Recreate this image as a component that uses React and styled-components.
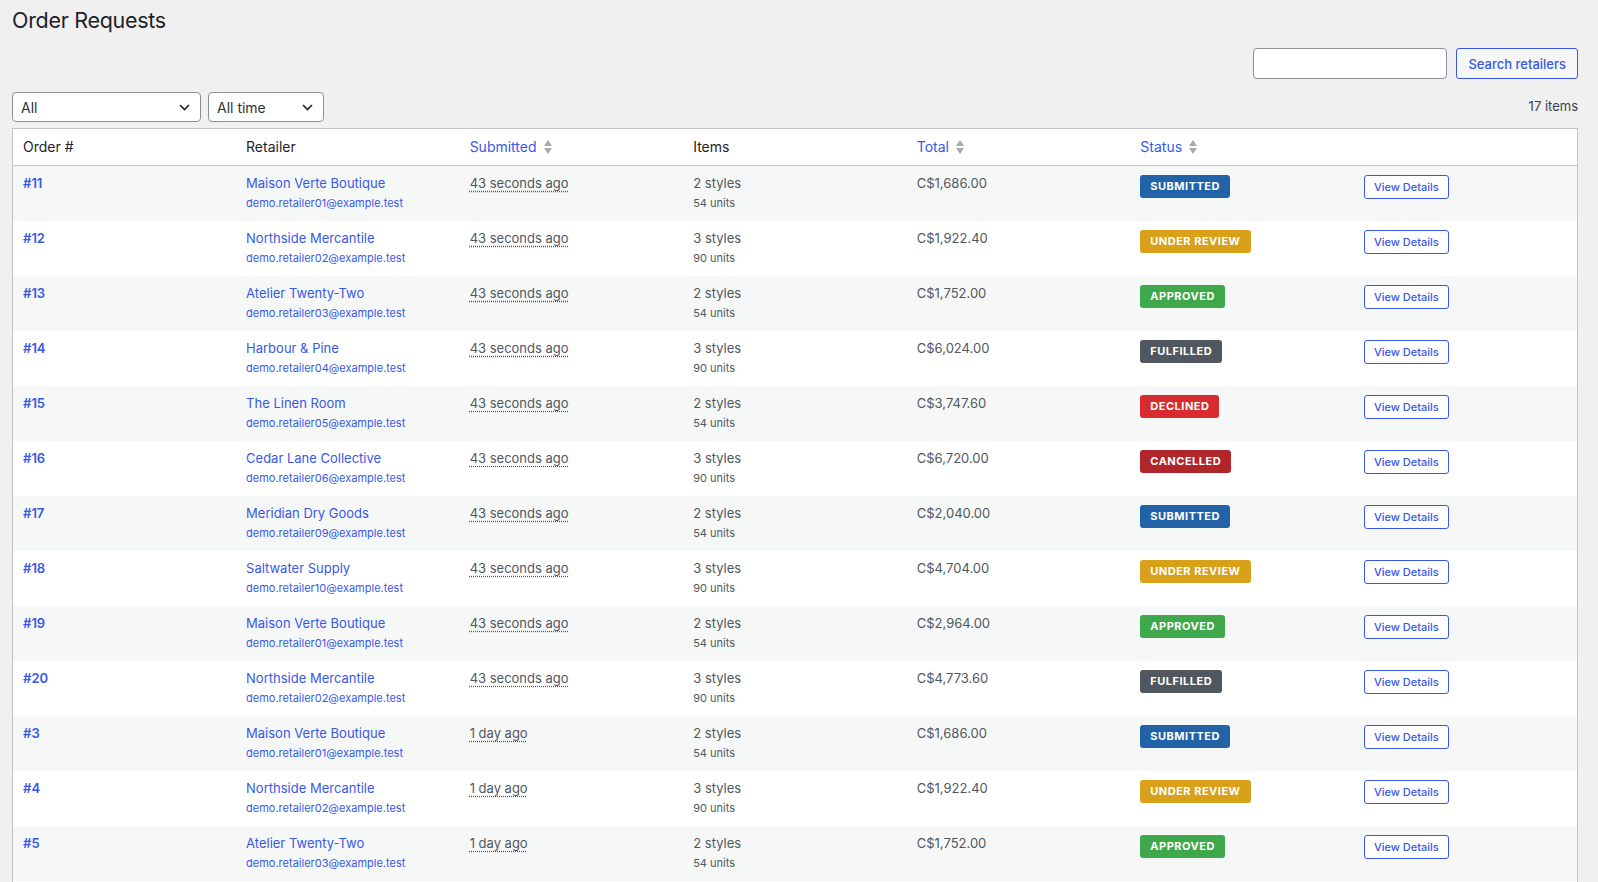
import React from 'react';
import styled, { createGlobalStyle } from 'styled-components';

const GlobalStyle = createGlobalStyle`
  body {
    margin: 0;
    background: #f0f0f1;
    color: #3c434a;
    font-family: Inter, "Liberation Sans", sans-serif;
    font-size: 13px;
  }
`;

const LINK = '#3858e9';

const Wrap = styled.div`
  padding: 0 20px 0 12px;
`;

const Title = styled.h1`
  margin: 0;
  padding: 5px 0 0;
  font-size: 21.5px;
  letter-spacing: -0.3px;
  line-height: 30px;
  font-weight: 400;
  color: #1d2327;
`;

const SearchBar = styled.div`
  display: flex;
  justify-content: flex-end;
  gap: 9px;
  margin-top: 13px;
`;

const SearchInput = styled.input`
  box-sizing: border-box;
  width: 194px;
  height: 31px;
  border: 1px solid #8c8f94;
  border-radius: 4px;
  background: #fff;
  padding: 0 8px;
  font: inherit;
`;

const Button = styled.button`
  box-sizing: border-box;
  height: ${(p) => (p.$small ? '24px' : '31px')};
  padding: 0 ${(p) => (p.$small ? '9px' : '11px')};
  border: 1px solid ${LINK};
  border-radius: 3px;
  background: ${(p) => (p.$small ? '#fff' : '#f6f7f7')};
  color: ${LINK};
  font-family: inherit;
  font-size: ${(p) => (p.$small ? '11px' : '13px')};
  font-weight: 500;
  cursor: pointer;
`;

const FilterBar = styled.div`
  display: flex;
  align-items: center;
  gap: 7px;
  margin-top: 13px;
`;

const SelectWrap = styled.div`
  position: relative;
  width: ${(p) => p.$width}px;
`;

const Select = styled.select`
  appearance: none;
  box-sizing: border-box;
  width: 100%;
  height: 30px;
  border: 1px solid #8c8f94;
  border-radius: 4px;
  background: #fff;
  padding: 0 24px 0 8px;
  font-family: inherit;
  font-size: 14px;
  color: #2c3338;
`;

const Chevron = styled.svg`
  position: absolute;
  right: 11px;
  top: 12px;
  pointer-events: none;
`;

const Count = styled.span`
  margin-left: auto;
  margin-bottom: 2px;
  color: #3c434a;
  font-size: 13px;
`;

const Table = styled.table`
  width: 100%;
  margin-top: 6px;
  border-collapse: collapse;
  table-layout: fixed;
  background: #fff;
  border: 1px solid #c3c4c7;
  box-shadow: 0 1px 1px rgba(0, 0, 0, 0.04);
`;

const Th = styled.th`
  text-align: left;
  font-weight: 400;
  font-size: 14px;
  line-height: 19.6px;
  padding: 8px 10px;
  color: #1d2327;
  border-bottom: 1px solid #c3c4c7;
`;

const SortLink = styled.a`
  display: inline-flex;
  align-items: center;
  gap: 7px;
  color: ${LINK};
  text-decoration: none;
`;

const Row = styled.tr`
  background: ${(p) => (p.$odd ? '#f6f7f7' : '#fff')};
`;

const Td = styled.td`
  vertical-align: top;
  padding: 8px 10px;
  line-height: 19.5px;
  color: #50575e;
  height: 39px;
`;

const OrderLink = styled.a`
  color: ${LINK};
  font-weight: 600;
  text-decoration: none;
`;

const NameLink = styled.a`
  display: block;
  color: ${LINK};
  text-decoration: none;
`;

const Sub = styled.div`
  margin-top: 2px;
  font-size: 11px;
  line-height: 16.5px;
  color: ${(p) => (p.$link ? LINK : '#50575e')};
`;

const Ago = styled.abbr`
  text-decoration: underline dotted #50575e;
  text-underline-offset: 3px;
`;

const BADGE_COLORS = {
  SUBMITTED: '#2263a8',
  'UNDER REVIEW': '#d9a11a',
  APPROVED: '#3ea84b',
  FULFILLED: '#50575e',
  DECLINED: '#d92b2f',
  CANCELLED: '#b0262b',
};

const CellBox = styled.div`
  display: flex;
  align-items: flex-start;
  padding-top: 1px;
`;

const Badge = styled.span`
  padding: 4px 10px;
  border-radius: 3px;
  background: ${(p) => p.$color};
  color: #fff;
  font-size: 11px;
  line-height: 15px;
  font-weight: 700;
  letter-spacing: 0.5px;
`;

function SortIcon() {
  return (
    <svg width="8" height="14" viewBox="0 0 8 14">
      <polygon points="0,6 4,0 8,6" fill="#a7aaad" />
      <polygon points="0,8 4,14 8,8" fill="#a7aaad" />
    </svg>
  );
}

const orders = [
  ['11', 'Maison Verte Boutique', '01', '43 seconds ago', 2, 'C$1,686.00', 'SUBMITTED'],
  ['12', 'Northside Mercantile', '02', '43 seconds ago', 3, 'C$1,922.40', 'UNDER REVIEW'],
  ['13', 'Atelier Twenty-Two', '03', '43 seconds ago', 2, 'C$1,752.00', 'APPROVED'],
  ['14', 'Harbour & Pine', '04', '43 seconds ago', 3, 'C$6,024.00', 'FULFILLED'],
  ['15', 'The Linen Room', '05', '43 seconds ago', 2, 'C$3,747.60', 'DECLINED'],
  ['16', 'Cedar Lane Collective', '06', '43 seconds ago', 3, 'C$6,720.00', 'CANCELLED'],
  ['17', 'Meridian Dry Goods', '09', '43 seconds ago', 2, 'C$2,040.00', 'SUBMITTED'],
  ['18', 'Saltwater Supply', '10', '43 seconds ago', 3, 'C$4,704.00', 'UNDER REVIEW'],
  ['19', 'Maison Verte Boutique', '01', '43 seconds ago', 2, 'C$2,964.00', 'APPROVED'],
  ['20', 'Northside Mercantile', '02', '43 seconds ago', 3, 'C$4,773.60', 'FULFILLED'],
  ['3', 'Maison Verte Boutique', '01', '1 day ago', 2, 'C$1,686.00', 'SUBMITTED'],
  ['4', 'Northside Mercantile', '02', '1 day ago', 3, 'C$1,922.40', 'UNDER REVIEW'],
  ['5', 'Atelier Twenty-Two', '03', '1 day ago', 2, 'C$1,752.00', 'APPROVED'],
  ['6', 'Harbour & Pine', '04', '1 day ago', 3, 'C$6,024.00', 'FULFILLED'],
  ['7', 'The Linen Room', '05', '1 day ago', 2, 'C$3,747.60', 'DECLINED'],
  ['8', 'Cedar Lane Collective', '06', '1 day ago', 3, 'C$6,720.00', 'CANCELLED'],
  ['9', 'Meridian Dry Goods', '09', '1 day ago', 2, 'C$2,040.00', 'SUBMITTED'],
];

function FilterSelect({ width, options }) {
  return (
    <SelectWrap $width={width}>
      <Select defaultValue={options[0]}>
        {options.map((o) => (
          <option key={o}>{o}</option>
        ))}
      </Select>
      <Chevron width="11" height="7" viewBox="0 0 11 7">
        <path d="M1 1l4.5 4.5L10 1" fill="none" stroke="#1d2327" strokeWidth="1.6" />
      </Chevron>
    </SelectWrap>
  );
}

export default function App() {
  return (
    <>
      <GlobalStyle />
      <Wrap>
        <Title>Order Requests</Title>
        <SearchBar>
          <SearchInput type="search" />
          <Button>Search retailers</Button>
        </SearchBar>
        <FilterBar>
          <FilterSelect width={189} options={['All', 'Submitted', 'Under review', 'Approved']} />
          <FilterSelect width={116} options={['All time', 'Last 7 days', 'Last 30 days']} />
          <Count>17 items</Count>
        </FilterBar>
        <Table>
          <thead>
            <tr>
              <Th>Order #</Th>
              <Th>Retailer</Th>
              <Th>
                <SortLink href="#">Submitted <SortIcon /></SortLink>
              </Th>
              <Th>Items</Th>
              <Th>
                <SortLink href="#">Total <SortIcon /></SortLink>
              </Th>
              <Th>
                <SortLink href="#">Status <SortIcon /></SortLink>
              </Th>
              <Th />
            </tr>
          </thead>
          <tbody>
            {orders.map(([id, name, num, ago, styles, total, status], i) => (
              <Row key={id} $odd={i % 2 === 0}>
                <Td>
                  <OrderLink href="#">#{id}</OrderLink>
                </Td>
                <Td>
                  <NameLink href="#">{name}</NameLink>
                  <Sub $link>demo.retailer{num}@example.test</Sub>
                </Td>
                <Td>
                  <Ago title={ago}>{ago}</Ago>
                </Td>
                <Td>
                  {styles} styles
                  <Sub>{styles === 2 ? 54 : 90} units</Sub>
                </Td>
                <Td>{total}</Td>
                <Td>
                  <CellBox>
                    <Badge $color={BADGE_COLORS[status]}>{status}</Badge>
                  </CellBox>
                </Td>
                <Td>
                  <CellBox>
                    <Button $small>View Details</Button>
                  </CellBox>
                </Td>
              </Row>
            ))}
          </tbody>
        </Table>
      </Wrap>
    </>
  );
}
